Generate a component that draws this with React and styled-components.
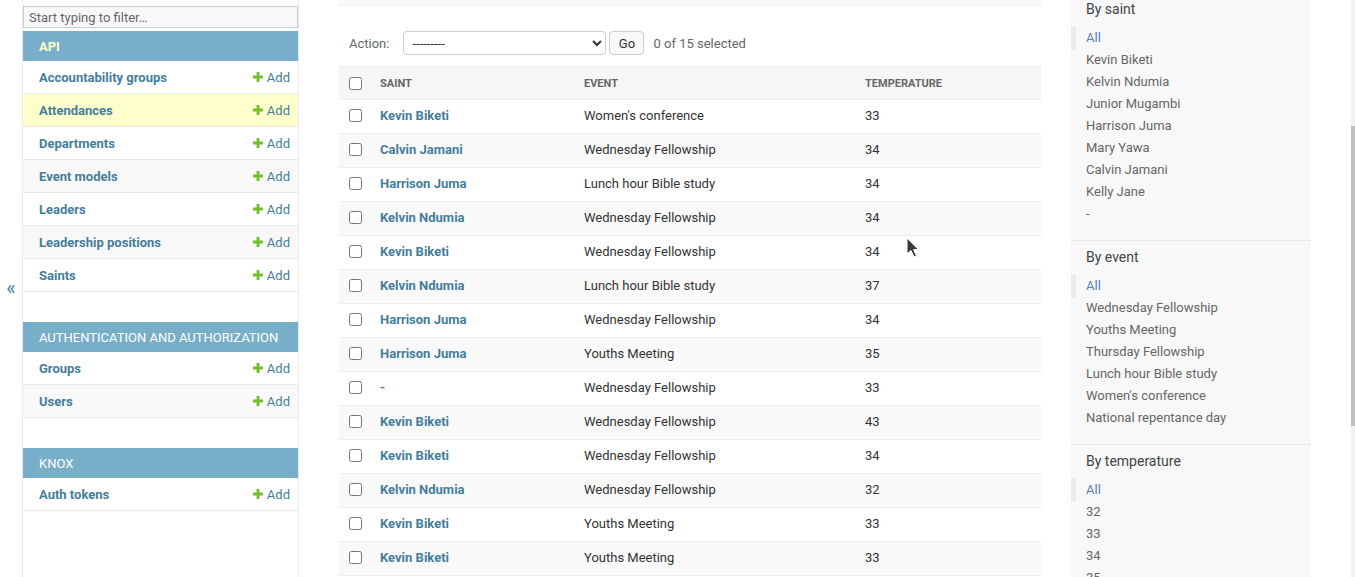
import React from "react";
import styled, { createGlobalStyle } from "styled-components";

const GlobalStyle = createGlobalStyle`
  html, body {
    margin: 0;
    padding: 0;
    height: 100%;
    overflow: hidden;
    background: #fff;
  }
  body {
    font-family: Roboto, "Liberation Sans", sans-serif;
    font-size: 14px;
    color: #333;
  }
`;

const apps = [
  {
    name: "API",
    current: true,
    models: [
      "Accountability groups",
      "Attendances",
      "Departments",
      "Event models",
      "Leaders",
      "Leadership positions",
      "Saints",
    ],
    selected: "Attendances",
  },
  { name: "Authentication and Authorization", models: ["Groups", "Users"] },
  { name: "Knox", models: ["Auth tokens"] },
];

const rows = [
  ["Kevin Biketi", "Women's conference", 33],
  ["Calvin Jamani", "Wednesday Fellowship", 34],
  ["Harrison Juma", "Lunch hour Bible study", 34],
  ["Kelvin Ndumia", "Wednesday Fellowship", 34],
  ["Kevin Biketi", "Wednesday Fellowship", 34],
  ["Kelvin Ndumia", "Lunch hour Bible study", 37],
  ["Harrison Juma", "Wednesday Fellowship", 34],
  ["Harrison Juma", "Youths Meeting", 35],
  ["-", "Wednesday Fellowship", 33],
  ["Kevin Biketi", "Wednesday Fellowship", 43],
  ["Kevin Biketi", "Wednesday Fellowship", 34],
  ["Kelvin Ndumia", "Wednesday Fellowship", 32],
  ["Kevin Biketi", "Youths Meeting", 33],
  ["Kevin Biketi", "Youths Meeting", 33],
];

const filters = [
  {
    title: "By saint",
    items: [
      "All",
      "Kevin Biketi",
      "Kelvin Ndumia",
      "Junior Mugambi",
      "Harrison Juma",
      "Mary Yawa",
      "Calvin Jamani",
      "Kelly Jane",
      "-",
    ],
  },
  {
    title: "By event",
    items: [
      "All",
      "Wednesday Fellowship",
      "Youths Meeting",
      "Thursday Fellowship",
      "Lunch hour Bible study",
      "Women's conference",
      "National repentance day",
    ],
  },
  { title: "By temperature", items: ["All", "32", "33", "34", "35"] },
];

const PlusIcon = () => (
  <svg width="10" height="10" viewBox="0 0 10 10">
    <path d="M3.6 0h2.8v3.6H10v2.8H6.4V10H3.6V6.4H0V3.6h3.6z" fill="#70bf2b" />
  </svg>
);

const Cursor = () => (
  <CursorWrap>
    <svg width="14" height="22" viewBox="0 0 14 22">
      <path
        d="M1 1 L1 17 L5 13.5 L8 20 L10.5 19 L7.6 12.6 L12.5 12.6 Z"
        fill="#3a3a3a"
        stroke="#fff"
        strokeWidth="1"
        strokeLinejoin="round"
      />
    </svg>
  </CursorWrap>
);

const App = () => {
  return (
    <Page>
      <GlobalStyle />
      <Toggle>«</Toggle>

      <NavSidebar>
        <NavFilter placeholder="Start typing to filter…" />
        {apps.map((app) => (
          <Module key={app.name}>
            <Caption current={app.current}>{app.name}</Caption>
            {app.models.map((m) => (
              <ModelRow key={m} selected={app.selected === m}>
                <ModelLink>{m}</ModelLink>
                <AddLink>
                  <PlusIcon />
                  Add
                </AddLink>
              </ModelRow>
            ))}
          </Module>
        ))}
      </NavSidebar>

      <Main>
        <Changelist>
          <FormContainer>
            <Toolbar />
            <Actions>
              <ActionLabel>Action:</ActionLabel>
              <ActionSelect defaultValue="">
                <option value="">---------</option>
                <option value="delete">Delete selected attendances</option>
              </ActionSelect>
              <GoButton>Go</GoButton>
              <Counter>0 of 15 selected</Counter>
            </Actions>
            <Table>
              <colgroup>
                <col style={{ width: 31 }} />
                <col style={{ width: 204 }} />
                <col style={{ width: 281 }} />
                <col />
              </colgroup>
              <thead>
                <tr>
                  <Th check>
                    <Check type="checkbox" />
                  </Th>
                  <Th>Saint</Th>
                  <Th>Event</Th>
                  <Th>Temperature</Th>
                </tr>
              </thead>
              <tbody>
                {rows.map((r, i) => (
                  <Tr key={i}>
                    <Td check>
                      <Check type="checkbox" />
                    </Td>
                    <Td>
                      <SaintLink>{r[0]}</SaintLink>
                    </Td>
                    <Td>{r[1]}</Td>
                    <Td>{r[2]}</Td>
                  </Tr>
                ))}
              </tbody>
            </Table>
          </FormContainer>

          <FilterPanel>
            {filters.map((f, i) => (
              <FilterSection key={f.title} first={i === 0}>
                <FilterTitle>{f.title}</FilterTitle>
                <FilterList>
                  {f.items.map((it) => (
                    <FilterItem key={it} selected={it === "All"}>
                      {it}
                    </FilterItem>
                  ))}
                </FilterList>
              </FilterSection>
            ))}
          </FilterPanel>
        </Changelist>
        <Cursor />
      </Main>

      <ScrollTrack>
        <ScrollThumb />
      </ScrollTrack>
    </Page>
  );
};

export default App;

const Page = styled.div`
  display: flex;
  height: 100vh;
  overflow: hidden;
`;

const Toggle = styled.div`
  flex: 0 0 22px;
  border-right: 1px solid #eaeaea;
  display: flex;
  align-items: center;
  justify-content: center;
  color: #447e9b;
  font-size: 20px;
  padding-bottom: 2px;
`;

const NavSidebar = styled.nav`
  flex: 0 0 275px;
  border-right: 1px solid #eaeaea;
  overflow: hidden;
`;

const NavFilter = styled.input`
  display: block;
  width: 100%;
  box-sizing: border-box;
  height: 22px;
  margin: 6px 0 3px;
  padding: 2px 5px;
  border: 1px solid #ccc;
  background: #f8f8f8;
  font-family: Roboto, "Liberation Sans", sans-serif;
  font-size: 13px;
  color: #333;
  &::placeholder {
    color: #666;
  }
`;

const Module = styled.div`
  margin-bottom: 30px;
`;

const Caption = styled.div`
  height: 30px;
  box-sizing: border-box;
  padding: 0 16px;
  display: flex;
  align-items: center;
  white-space: nowrap;
  background: #79aec8;
  color: ${(p) => (p.current ? "#ffc" : "#fff")};
  font-size: 13px;
  font-weight: ${(p) => (p.current ? 700 : 400)};
  letter-spacing: 0;
  text-transform: uppercase;
`;

const ModelRow = styled.div`
  display: flex;
  align-items: center;
  justify-content: space-between;
  height: 33px;
  box-sizing: border-box;
  padding: 0 8px 0 16px;
  border-bottom: 1px solid #eaeaea;
  background: #fff;
  &:nth-of-type(odd) {
    background: #f8f8f8;
  }
  ${(p) => p.selected && "&& { background: #ffc; }"}
`;

const ModelLink = styled.span`
  color: #447e9b;
  font-size: 13px;
  font-weight: 700;
`;

const AddLink = styled.span`
  display: flex;
  align-items: center;
  gap: 4px;
  color: #447e9b;
  font-size: 13px;
`;

const Main = styled.main`
  flex: 1;
  padding: 0 40px;
  position: relative;
  min-width: 0;
`;

const Changelist = styled.div`
  display: flex;
  align-items: stretch;
  height: 100%;
`;

const FormContainer = styled.div`
  flex: 1;
  min-width: 0;
`;

const Toolbar = styled.div`
  height: 5px;
  background: #f8f8f8;
  border-bottom: 1px solid #eee;
  margin-bottom: 15px;
`;

const Actions = styled.div`
  display: flex;
  align-items: center;
  padding: 10px 10px 11px;
  height: 24px;
  color: #666;
  font-size: 13px;
`;

const ActionLabel = styled.span`
  margin-right: 14px;
`;

const ActionSelect = styled.select`
  width: 203px;
  height: 24px;
  border: 1px solid #ccc;
  border-radius: 4px;
  background: #fff;
  font-family: Roboto, "Liberation Sans", sans-serif;
  font-size: 13px;
  color: #333;
  padding: 0 4px;
`;

const GoButton = styled.button`
  margin-left: 3px;
  width: 35px;
  height: 24px;
  border: 1px solid #ccc;
  border-radius: 4px;
  background: #f8f8f8;
  font-family: Roboto, "Liberation Sans", sans-serif;
  font-size: 13px;
  color: #333;
  padding: 0;
`;

const Counter = styled.span`
  margin-left: 9px;
`;

const Table = styled.table`
  width: 100%;
  border-collapse: collapse;
  table-layout: fixed;
  border-top: 1px solid #eee;
`;

const Th = styled.th`
  height: 33px;
  box-sizing: border-box;
  padding: ${(p) => (p.check ? "0 0 0 10px" : "0 10px")};
  text-align: left;
  background: #f6f6f6;
  border-bottom: 1px solid #eee;
  color: #666;
  font-size: 11px;
  font-weight: 700;
  text-transform: uppercase;
  vertical-align: middle;
`;

const Tr = styled.tr`
  background: #fff;
  &:nth-child(even) {
    background: #f9f9f9;
  }
`;

const Td = styled.td`
  height: 34px;
  box-sizing: border-box;
  padding: ${(p) => (p.check ? "0 0 2px 10px" : "0 10px 2px")};
  border-bottom: 1px solid #eee;
  font-size: 13px;
  color: #333;
  vertical-align: middle;
  white-space: nowrap;
`;

const Check = styled.input`
  margin: 0;
  width: 13px;
  height: 13px;
  display: block;
`;

const SaintLink = styled.span`
  color: #447e9b;
  font-weight: 700;
`;

const FilterPanel = styled.div`
  flex: 0 0 240px;
  margin-left: 30px;
  background: #f8f8f8;
  overflow: hidden;
`;

const FilterSection = styled.div`
  padding: ${(p) => (p.first ? "0" : "7px")} 15px 15px;
  border-bottom: 1px solid #eaeaea;
`;

const FilterTitle = styled.h3`
  margin: 0 0 9px;
  font-size: 14px;
  line-height: 18px;
  font-weight: 400;
  color: #444;
`;

const FilterList = styled.ul`
  list-style: none;
  margin: 0;
  padding: 0;
`;

const FilterItem = styled.li`
  height: 22px;
  line-height: 22px;
  font-size: 13px;
  color: ${(p) => (p.selected ? "#5b80b2" : "#666")};
  ${(p) =>
    p.selected &&
    `
    margin-left: -15px;
    padding-left: 10px;
    border-left: 5px solid #eaeaea;
  `}
`;

const CursorWrap = styled.div`
  position: absolute;
  left: 607px;
  top: 237px;
  pointer-events: none;
`;

const ScrollTrack = styled.div`
  flex: 0 0 4px;
  background: #f1f1f1;
  display: flex;
  flex-direction: column;
  padding-top: 126px;
`;

const ScrollThumb = styled.div`
  height: 300px;
  background: #c1c1c1;
`;
